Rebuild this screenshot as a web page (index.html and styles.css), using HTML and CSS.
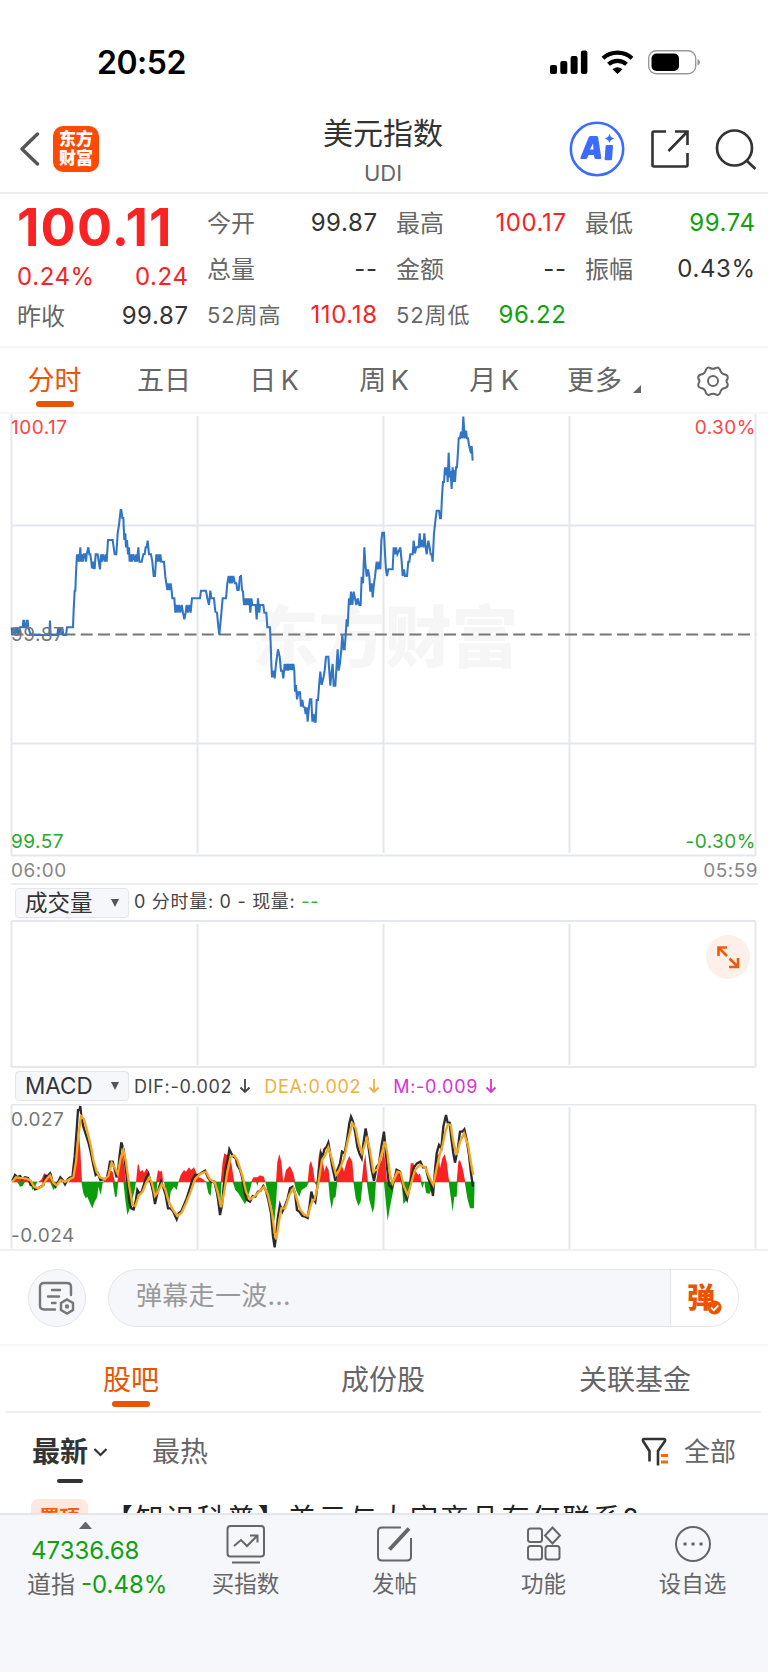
FILE: index.html
```html
<!DOCTYPE html>
<html lang="zh-CN">
<head>
<meta charset="UTF-8" />
<meta name="viewport" content="width=device-width, initial-scale=1" />
<title>美元指数 UDI</title>
<link rel="stylesheet" href="styles.css">
</head>
<body>

<!-- Status bar -->
<div class="status-bar">
  <span class="clock">20:52</span>
  <svg class="status-icons" width="152" height="28" viewBox="0 0 152 28" aria-hidden="true">
    <rect x="0" y="15" width="7" height="9" rx="2"/>
    <rect x="10.300" y="11" width="7" height="13" rx="2"/>
    <rect x="20.600" y="6" width="7" height="18" rx="2"/>
    <rect x="30.900" y="0.500" width="6.500" height="23.500" rx="2"/>
    <g fill="none" stroke="#000" stroke-width="4.200">
      <path d="M53 8.300a21.500 21.500 0 0 1 29 0"/>
      <path d="M58.500 14.300a13.500 13.500 0 0 1 18 0"/>
    </g>
    <path d="M67.500 24l-5-4.800q5-4 10 0z"/>
    <rect x="98.700" y="0.700" width="47" height="23" rx="7.500" fill="none" stroke="#999" stroke-width="1.400"/>
    <rect x="101.500" y="3.500" width="27.500" height="17.500" rx="5"/>
    <path d="M147.500 9v6.500q2.500-1 2.500-3.200t-2.500-3.300z" fill="#999"/>
  </svg>
</div>

<!-- Header -->
<header class="header">
  <div class="header-left">
    <svg width="20" height="34" viewBox="0 0 20 34" fill="none" stroke="#555" stroke-width="3.400" stroke-linecap="round" stroke-linejoin="round"><path d="M17.500 2L2 17l15.500 15"/></svg>
    <div class="logo"><span>东方</span><span>财富</span></div>
  </div>
  <div class="header-title">
    <h1>美元指数</h1>
    <p>UDI</p>
  </div>
  <div class="header-right">
    <svg width="56" height="56" viewBox="0 0 56 56">
      <circle cx="28" cy="28" r="26.200" fill="#fff" stroke="#3b6cff" stroke-width="2.600"/>
      <path fill="#3b6cff" fill-rule="evenodd" d="M19.500 16.500q.5-1.500 2-1.500h6q1.500 0 1.700 1.500l3 20q.2 1.500-1.200 1.500h-4q-1.500 0-1.700-1.500l-.3-2.500h-5.500l-1 2.500q-.5 1.500-2 1.500h-4q-1.500 0-1-1.500zM21 28.500h3.500l-.5-6z"/>
      <path fill="#3b6cff" d="M38 24h5q1.200 0 1 1.300l-1 12.700q-.1 1.300-1.400 1.300h-4.800q-1.300 0-1.200-1.300l1-12.700q.1-1.300 1.400-1.300zM40.500 13l1.300 2.800 3.200 1.700-3.200 1.700-1.300 2.800-1.300-2.800-3.200-1.700 3.200-1.700z"/>
    </svg>
    <svg width="40" height="40" viewBox="0 0 40 40" fill="none" stroke="#333" stroke-width="2.600">
      <path d="M16 2.500H4q-1.500 0-1.500 1.500v32q0 1.500 1.500 1.500h32q1.500 0 1.500-1.500V24M25 2.500h12.500V16M37 3L18.500 22"/>
    </svg>
    <svg width="42" height="42" viewBox="0 0 42 42" fill="none" stroke="#333" stroke-width="2.700">
      <circle cx="19.500" cy="20" r="17.500"/><path d="M31.500 32.500l9 8.500"/>
    </svg>
  </div>
</header>

<!-- Quote -->
<section class="quote">
  <div class="quote-col main">
    <div class="price red">100.11</div>
    <div class="row change"><b class="red">0.24%</b><b class="red">0.24</b></div>
    <div class="row prev"><span>昨收</span><b>99.87</b></div>
  </div>
  <div class="quote-col">
    <div class="row"><span>今开</span><b>99.87</b></div>
    <div class="row"><span>总量</span><b>--</b></div>
    <div class="row"><span class="small">52周高</span><b class="red">110.18</b></div>
  </div>
  <div class="quote-col">
    <div class="row"><span>最高</span><b class="red">100.17</b></div>
    <div class="row"><span>金额</span><b>--</b></div>
    <div class="row"><span class="small">52周低</span><b class="green">96.22</b></div>
  </div>
  <div class="quote-col">
    <div class="row"><span>最低</span><b class="green">99.74</b></div>
    <div class="row"><span>振幅</span><b>0.43%</b></div>
  </div>
</section>

<!-- Period tabs -->
<nav class="periods">
  <span class="active">分时</span>
  <span>五日</span>
  <span>日 K</span>
  <span>周 K</span>
  <span>月 K</span>
  <span class="more">更多<i></i></span>
  <span class="gear">
    <svg width="32" height="30" viewBox="0 0 32 30" fill="none" stroke="#666" stroke-width="2" stroke-linejoin="round">
      <path d="M9 3.500Q11 .5 13 2q3 1.500 6 0 2-1.500 4 1.500 1 4.500 5 5 3.500 1 2.500 4.500-2 2 0 4.500 1 3.500-2.500 4.500-4 .5-5 5-2 3-4 1.500-3-1.500-6 0-2 1.500-4-1.500-1-4.500-5-5-3.500-1-2.500-4.500 2-2.500 0-4.500-1-3.500 2.500-4.500 4-.5 5-5z"/>
      <circle cx="16" cy="15" r="5"/>
    </svg>
  </span>
</nav>

<!-- Intraday chart -->
<svg class="chart" width="768" height="443" viewBox="0 414 768 443">
  <text class="watermark" x="252" y="662">东方财富</text>
  <path class="grid" d="M11.500 414v442M197.500 416v437M383.500 416v437M569.500 416v437M755.500 414v442M11.500 525.500h744M11.500 743.500h744M11.500 855.500h744"/>
  <path d="M11.500 634.500h744" stroke="#777" stroke-width="2" stroke-dasharray="12 5.300"/>
  <g class="price-line" transform="translate(0 410) scale(.33333)">
    <polyline points="35,652 37,675 41,652 45,675 50,652 55,675 60,652 68,652 70,632 72,632 74,652 78,652 80,632 83,632 85,652 92,675 148,675 150,632 152,675 172,675 175,652 178,675 182,652 184,675 187,652 190,675 198,675 201,652 219,652 221,600 224,542 226,542 228,490 231,433 233,455 236,433 238,455 241,412 243,455 247,433 249,455 252,433 256,433 258,455 260,433 265,412 268,433 271,433 274,455 276,475 279,455 281,475 284,475 287,433 293,433 296,455 300,478 303,433 305,455 310,433 314,455 318,433 320,455 324,390 338,390 341,412 344,433 349,433 353,370 357,345 362,300 364,300 367,324 370,324 373,390 376,370 378,412 381,390 384,433 387,412 389,455 393,433 395,455 400,433 405,455 409,433 411,455 415,412 418,455 425,455 430,433 434,433 437,412 440,412 443,392 447,433 453,433 457,455 461,498 465,498 469,433 472,455 475,433 478,455 481,433 484,455 492,455 496,500 499,520 502,540 505,520 508,540 512,520 515,542 517,565 523,565 526,608 530,585 533,608 537,585 541,608 545,585 549,608 553,628 557,608 560,585 564,608 568,585 572,608 576,565 600,565 603,542 618,542 622,565 627,585 631,542 634,565 642,565 646,605 651,608 655,650 658,675 664,610 668,565 678,565 682,520 686,498 690,520 693,498 696,520 700,498 705,520 709,520 712,540 716,540 720,498"/>
    <polyline transform="translate(720 0)" points="0,498 3,498 6,540 9,545 12,585 16,565 18,585 22,565 25,585 28,565 31,608 34,565 37,585 47,585 50,628 54,565 58,608 60,585 70,585 73,608 79,608 82,652 90,652 92,700 94,760 96,802 100,782 104,805 108,762 111,740 114,718 119,740 123,782 127,782 130,805 134,762 137,782 141,762 144,782 147,762 151,780 154,762 157,780 160,762 163,782 165,845 168,825 171,868 175,847 180,847 183,890 187,870 190,890 194,892 197,912 200,892 203,935 207,890 210,868 214,868 217,935 221,912 224,935 227,935 230,870 234,870 237,830 241,785 245,825 250,805 254,782 258,740 265,740 268,785 271,827 275,785 278,762 281,827 286,827 290,762 293,718 296,782 300,760 304,718 307,675 311,718 314,718 317,675 320,628 323,650 327,565 330,585 333,545 337,585 341,545 345,565 349,585 353,565 358,585 362,585 365,500 369,520 373,412 376,460 380,500 384,478 388,500 391,545 395,520 398,562 402,520 405,500 410,455 414,478 418,455 421,478 424,392 427,368 432,368 435,430 438,480 441,498 445,478 458,478 461,412 465,433 468,412 472,433 481,412 485,455 488,498 492,478 495,498 501,498 505,455 508,455 511,433 518,433 521,392 525,430 529,412 536,412 539,370 542,412 546,390 550,412 553,370 557,412 560,433 565,392 569,412 572,433 575,433 578,455 582,370 587,325 590,302 597,302 600,325 603,325 606,260 609,216 612,216 615,172 618,195 621,172 623,216 626,128 629,195 632,190 635,237 638,172 641,216 643,180 645,216 648,172 651,172 655,108 656,85 660,85 663,65 667,85 670,20 674,85 678,62 681,85 684,85 687,105 693,130 695,108 698,152"/>
  </g>
  <text class="tick up" x="11" y="433.500">100.17</text>
  <text class="tick up end" x="756" y="433.500">0.30%</text>
  <text class="tick base" x="11" y="641">99.87</text>
  <text class="tick down" x="11" y="848">99.57</text>
  <text class="tick down end" x="756" y="848">-0.30%</text>
</svg>
<div class="times"><span>06:00</span><span>05:59</span></div>

<!-- Volume -->
<div class="legend">
  <button class="picker">成交量<i></i></button>
  <span class="volume-text">0 分时量: 0 - 现量: <em>--</em></span>
</div>
<div class="volume">
  <svg width="768" height="148" viewBox="0 920 768 148">
    <path class="grid" d="M11.500 921v146M197.500 924v141M383.500 924v141M569.500 924v141M755.500 921v146M11.500 921h744M11.500 1067h744"/>
  </svg>
  <button class="expand" aria-label="全屏">
    <svg width="24" height="24" viewBox="0 0 24 24" fill="none" stroke="#ee5a0c" stroke-width="2.600">
      <path d="M2.500 11V2.500H11M3 3l8 8M13 22h9v-9M21.500 21.500l-8-8"/>
    </svg>
  </button>
</div>

<!-- MACD -->
<div class="legend macd-legend">
  <button class="picker">MACD<i></i></button>
  <span class="dif">DIF:-0.002<svg viewBox="0 0 12 16"><path d="M6 1v13M1.500 9.500L6 14l4.500-4.500"/></svg></span>
  <span class="dea">DEA:0.002<svg viewBox="0 0 12 16"><path d="M6 1v13M1.500 9.500L6 14l4.500-4.500"/></svg></span>
  <span class="m">M:-0.009<svg viewBox="0 0 12 16"><path d="M6 1v13M1.500 9.500L6 14l4.500-4.500"/></svg></span>
</div>
<svg class="chart" width="768" height="145" viewBox="0 1104 768 145">
  <path class="grid" d="M11.500 1104.500v144M197.500 1107v142M383.500 1107v142M569.500 1107v142M755.500 1104.500v144M11.500 1104.500h744"/>
  <text class="tick" x="11" y="1126">0.027</text>
  <text class="tick" x="11" y="1242">-0.024</text>
  <g transform="translate(0 1090) scale(.33333)">
    <path fill="#f92323" d="M37 277L45 258 60 268 68 262 85 268 90 277zM115 277L125 268 132 250 145 258 155 248 160 277zM172 277L182 262 188 277zM205 277L218 262 226 210 232 150 237 130 241 180 246 277zM310 277L322 255 330 240 338 245 345 277zM352 277L360 220 367 195 373 230 378 277zM408 277L413 225 416 222 420 245 428 240 432 248 440 235 447 245 455 277zM468 277L474 240 480 245 486 242 490 277zM535 277L542 255 552 240 558 245 567 232 573 240 582 232 588 245 592 260 605 265 620 277zM662 277L668 215 673 190 680 195 688 190 695 225 703 277z"/>
    <path fill="#0a9e0a" d="M52 275L60 290 68 288 75 275zM90 275L97 300 105 290 112 275zM150 275L160 300 168 290 178 275zM244 275L250 310 257 325 262 320 268 335 277 355 284 335 292 320 295 290 302 315 308 280 312 275zM338 275L345 320 350 320 355 275zM370 275L376 330 382 375 390 355 398 325 404 300 408 275zM453 275L460 310 467 335 472 275zM492 275L503 330 508 340 512 305 522 290 530 300 536 275zM618 275L625 310 632 318 636 275zM640 275L652 330 660 355 665 275zM698 275L706 300 715 310 720 318 735 343 742 325 750 300 756 275z"/>
    <g transform="translate(720 0)">
      <path fill="#f92323" d="M33 277L40 262 52 262 60 256 72 260 76 277zM108 277L112 215 118 192 124 215 130 277 138 240 150 228 160 250 166 277zM203 277L208 225 213 212 219 235 225 277zM230 277L236 200 241 172 248 215 254 245 258 225 266 240 270 277zM288 277L297 240 305 225 312 245 320 215 328 198 337 215 342 277zM365 277L370 225 376 192 380 240 384 277zM408 277L415 235 425 210 432 180 438 240 441 277zM460 277L466 235 478 240 486 277zM508 277L512 220 520 220 528 245 535 255 540 250 545 277zM585 277L589 200 596 190 600 235 607 205 614 192 620 215 626 265 630 277zM650 277L655 215 660 210 668 235 676 277z"/>
      <path fill="#0a9e0a" d="M48 275L52 288 56 275zM76 275L85 315 95 350 103 395 108 340 112 275zM162 275L168 300 178 320 185 300 200 290 207 275zM222 275L228 285 232 275zM265 275L269 320 275 358 281 325 287 320 292 275zM340 275L347 325 355 348 362 335 368 275zM380 275L388 330 398 368 403 350 408 275zM432 275L437 330 443 392 450 350 458 310 464 275zM485 275L490 342 500 330 506 300 508 275zM542 275L547 295 553 275 558 308 568 312 574 300 580 318 584 275zM626 275L632 320 638 365 643 320 650 320 653 275zM674 275L682 325 690 355 702 355 704 275z"/>
    </g>
    <path d="M35 275.500h1387" stroke="#c55" stroke-width="2" opacity=".5"/>
    <polyline class="dif-line" points="37,272 45,255 52,262 60,258 66,268 75,262 84,264 92,285 98,283 105,298 113,295 122,290 130,285 136,258 143,258 150,250 157,275 167,290 173,278 181,262 188,270 195,283 203,268 210,262 217,262 224,200 230,120 234,60 239,58 241,48 244,80 250,110 258,135 266,160 273,190 280,225 287,255 294,250 301,270 310,268 320,265 326,240 330,215 338,215 343,235 350,262 355,235 359,195 364,157 371,180 376,225 382,275 388,335 394,355 401,358 407,335 412,300 418,310 425,305 433,280 438,265 445,252 453,280 459,305 465,342 472,310 478,290 483,275 489,290 497,315 504,355 512,355 520,365 530,388 536,370 543,365 552,345 560,325 568,300 577,270 585,255 595,255 605,248 615,242 624,262 632,275 643,275 652,310 660,375 666,345 671,290 678,230 684,205 688,178 694,190 700,200 707,205 712,225 720,240"/>
    <polyline class="dif-line" transform="translate(720 0)" points="0,240 6,260 14,310 21,330 30,335 38,318 46,320 54,305 62,302 70,288 77,300 85,330 93,370 99,440 104,472 108,440 114,380 120,345 127,365 136,345 143,325 150,295 158,290 165,310 171,360 178,365 187,378 196,380 203,384 209,345 214,305 220,325 226,335 232,290 238,230 243,190 248,200 253,178 260,170 265,158 271,195 277,230 286,272 292,240 300,220 306,185 314,190 321,150 328,100 333,80 339,95 346,130 352,170 358,190 365,205 371,155 377,115 383,150 388,190 395,240 402,272 410,230 417,222 424,170 432,125 437,180 441,230 447,285 455,295 463,268 471,240 480,245 487,275 494,310 501,328 508,295 514,260 522,232 531,220 541,215 549,232 557,232 565,265 573,285 579,318 585,240 590,190 597,165 604,175 610,110 618,75 623,98 629,98 634,145 640,190 645,218 653,180 660,125 667,125 673,118 680,150 687,195 693,250 699,290"/>
    <polyline class="dea-line" points="37,275 48,262 60,264 80,266 92,272 102,290 113,295 126,290 138,270 150,256 160,278 170,286 182,270 195,276 210,266 220,262 228,215 235,140 243,78 252,88 262,125 272,165 280,210 290,245 300,262 315,268 325,258 335,218 345,235 353,252 362,205 370,180 378,215 388,290 398,345 406,348 416,318 428,305 438,280 448,262 456,280 465,318 474,305 485,282 496,298 506,335 518,358 532,378 545,368 558,340 572,305 585,268 600,252 618,245 630,268 645,278 654,310 663,352 672,310 682,245 692,200 702,196 712,210 720,235"/>
    <polyline class="dea-line" transform="translate(720 0)" points="0,235 8,260 18,305 30,328 45,318 60,302 72,290 84,315 96,370 104,430 109,448 116,400 124,355 135,355 148,315 160,295 170,325 180,358 193,374 203,378 214,340 224,328 234,285 246,210 256,195 265,172 275,205 288,255 298,240 312,205 325,145 337,100 347,115 356,160 366,190 374,165 381,145 390,180 400,245 412,238 425,190 435,155 442,190 450,255 458,280 472,245 482,248 492,290 503,315 512,285 525,240 540,225 556,232 568,262 580,285 590,235 600,190 608,165 616,125 624,103 632,105 641,160 650,195 660,155 672,130 684,165 694,225 700,255"/>
  </g>
</svg>

<!-- Danmaku input -->
<div class="danmaku">
  <div class="danmaku-set">
    <svg width="38" height="34" viewBox="0 0 38 34" fill="none" stroke="#777" stroke-width="2.400" stroke-linecap="round">
      <path d="M17 28.500H6q-4 0-4-4V6q0-4 4-4h23q4 0 4 4v8M14 9h8M10 15.500h11M14 22h3.500"/>
      <path d="M29 18.500l6 3.500v7l-6 3.500-6-3.500v-7z"/><circle cx="29" cy="25.500" r="1"/>
    </svg>
  </div>
  <div class="danmaku-box">
    <span>弹幕走一波...</span>
    <div class="danmaku-send">
      <b>弹</b>
      <svg width="15" height="15" viewBox="0 0 15 15"><circle cx="7.500" cy="7.500" r="7" fill="#ea5504"/><path d="M4 7.500l2.800 2.800 4.500-5" fill="none" stroke="#fff" stroke-width="1.800"/></svg>
    </div>
  </div>
</div>

<!-- Section tabs -->
<nav class="sections">
  <span class="active">股吧</span>
  <span>成份股</span>
  <span>关联基金</span>
</nav>

<div class="filters">
  <span class="newest">最新<svg width="15" height="9" viewBox="0 0 15 9" fill="none" stroke="#333" stroke-width="2.200"><path d="M1.500 1l6 6 6-6"/></svg></span>
  <span class="hot">最热</span>
  <span class="all">
    <svg width="28" height="30" viewBox="0 0 28 30" fill="none" stroke="#333" stroke-width="2.600" stroke-linejoin="round">
      <path d="M8.500 24.500V14L2 4q-.5-2 1-2h20q1.500 0 1 2l-7 10v14.500"/>
      <path d="M20 18.500h7M20 25h7" stroke="#f60" stroke-width="3"/>
    </svg>
    全部
  </span>
</div>

<div class="post">
  <span class="badge">置顶</span>
  <span class="post-title">【知识科普】美元与大宗商品有何联系?</span>
</div>

<!-- Bottom bar -->
<footer class="bottom-bar">
  <div class="index">
    <i></i>
    <span class="green">47336.68</span>
    <span>道指<b class="green">-0.48%</b></span>
  </div>
  <div class="action">
    <svg width="40" height="40" viewBox="0 0 40 40"><rect x="1.500" y="2" width="36.500" height="30.500" rx="3"/><path d="M8 22l7-6 6 6 10-10M24 11.500h7.500v7M6 38.500h28"/></svg>
    买指数
  </div>
  <div class="action">
    <svg width="40" height="40" viewBox="0 0 40 40"><path d="M26 3.500H7q-4 0-4 4v25q0 4 4 4h25q4 0 4-4V14"/><path d="M14.500 25.500L34 4.500" stroke-width="4"/></svg>
    发帖
  </div>
  <div class="action">
    <svg width="40" height="40" viewBox="0 0 40 40"><rect x="4" y="4.500" width="14" height="13.500" rx="2.500"/><path d="M28.500 3.500l7.500 8-7.500 8-7.500-8z"/><rect x="4" y="22" width="14" height="13.500" rx="2.500"/><rect x="21.500" y="22" width="14" height="13.500" rx="2.500"/></svg>
    功能
  </div>
  <div class="action">
    <svg width="40" height="40" viewBox="0 0 40 40"><circle cx="20" cy="20" r="17"/><path d="M12 20h.1M20 20h.1M28 20h.1" stroke-width="3.500" stroke-linecap="round"/></svg>
    设自选
  </div>
</footer>

</body>
</html>
```
FILE: styles.css
```css
* { box-sizing: border-box; }
body {
  margin: 0;
  width: 768px;
  height: 1672px;
  overflow: hidden;
  background: #fff;
  color: #666;
  font-family: Inter, 'Noto Sans CJK SC', sans-serif;
  display: flex;
  flex-direction: column;
}
body > * { flex-shrink: 0; }
svg { display: block; }
b, em, i { font-weight: 400; font-style: normal; }
button {
  font-family: inherit;
  border: none;
  padding: 0;
  margin: 0;
}
.red { color: #f92323 !important; }
.green { color: #10a010 !important; }

/* Status bar */
.status-bar {
  height: 100px;
  padding: 0 66px 0 97px;
  display: flex;
  justify-content: space-between;
}
.clock {
  margin-top: 43px;
  font-size: 32px;
  line-height: 40px;
  font-weight: 600;
  letter-spacing: -.5px;
  color: #000;
}
.status-icons { margin-top: 50px; }

/* Header */
.header {
  height: 94px;
  display: grid;
  grid-template-columns: 1fr 160px 1fr;
  border-bottom: 2px solid #eee;
}
.header-left {
  display: flex;
  align-items: center;
  gap: 13px;
  padding: 6px 0 0 20px;
}
.logo {
  width: 46px;
  height: 46px;
  border-radius: 10px;
  background: #ff4a05;
  color: #fff;
  font-size: 17px;
  line-height: 19px;
  font-weight: 900;
  display: flex;
  flex-direction: column;
  align-items: center;
  justify-content: center;
}
.header-title {
  text-align: center;
  padding-right: 2px;
}
.header-title h1 {
  margin: 13px 0 0;
  font-size: 30px;
  line-height: 40px;
  font-weight: 400;
  color: #333;
}
.header-title p {
  margin: 6px 0 0;
  font-size: 22px;
  line-height: 28px;
}
.header-right {
  display: flex;
  align-items: center;
  justify-content: flex-end;
  gap: 25px;
  padding: 6px 11px 0 0;
}

/* Quote */
.quote {
  height: 154px;
  padding: 5px 13px 0 17px;
  display: grid;
  grid-template-columns: 171px 170px 170px 170px;
  column-gap: 19px;
  border-bottom: 2px solid #f7f7f7;
}
.row {
  height: 46px;
  display: flex;
  justify-content: space-between;
  align-items: center;
  font-size: 24px;
}
.row span { margin-top: -2px; }
.row b {
  color: #333;
  letter-spacing: .6px;
  margin-right: -.6px;
}
.row .small {
  font-size: 22px;
  letter-spacing: .9px;
}
.price {
  height: 57px;
  font-size: 52px;
  line-height: 57px;
  font-weight: 700;
  letter-spacing: 1.2px;
}
.change { height: 40px; }
.prev { height: 38px; }

/* Period tabs */
.periods {
  height: 66px;
  display: grid;
  grid-template-columns: 109px repeat(5, 110px) 107px;
  border-bottom: 2px solid #f7f7f7;
}
.periods span {
  font-size: 27px;
  line-height: 65px;
  text-align: center;
  word-spacing: -3px;
}
.periods .active, .sections .active {
  color: #ea5504;
  display: flex;
  flex-direction: column;
  align-items: center;
}
.periods .active::after, .sections .active::after {
  content: "";
  width: 38px;
  height: 6px;
  margin-top: -12px;
  border-radius: 3px;
  background: #ea5504;
}
.periods .more { letter-spacing: 1px; }
.more i {
  display: inline-block;
  margin-left: 10px;
  position: relative;
  top: 3px;
  border-left: 8px solid transparent;
  border-bottom: 8px solid #666;
}
.gear {
  display: flex;
  align-items: center;
  justify-content: center;
}

/* Charts */
.grid {
  fill: none;
  stroke: #e6e7ee;
  stroke-width: 2;
}
.watermark {
  font-size: 66.500px;
  font-weight: 900;
  fill: #f6f6f6;
}
.price-line polyline {
  fill: none;
  stroke: #3275c4;
  stroke-width: 6.2;
}
.tick {
  font-size: 19px;
  letter-spacing: .5px;
  fill: #777;
}
.tick.up { fill: #f44; }
.tick.down { fill: #2ba82b; }
.tick.end { text-anchor: end; }
.dif-line, .dea-line {
  fill: none;
  stroke: #2b2b2b;
  stroke-width: 7;
}
.dea-line { stroke: #f5a623; }
.times {
  height: 28px;
  margin: 0 10px 0 11px;
  display: flex;
  justify-content: space-between;
  font-size: 19px;
  line-height: 27px;
  letter-spacing: .5px;
  color: #888;
  border-bottom: 2px solid #eee;
}
.legend {
  height: 35px;
  padding-left: 15px;
  display: flex;
  align-items: center;
  font-size: 18px;
  letter-spacing: .7px;
  color: #444;
}
.picker {
  width: 114px;
  height: 30px;
  margin-right: 5px;
  padding: 0 9px;
  display: flex;
  align-items: center;
  justify-content: space-between;
  font-size: 22.5px;
  line-height: 26px;
  color: #333;
  background: #f6f7fa;
  border: 1px solid #e4e5ec;
  border-radius: 4px;
}
.picker i {
  border: 4.5px solid transparent;
  border-top: 8px solid #555;
  border-bottom: 0;
}
.volume-text { line-height: 26px; padding-bottom: 2px; }
.legend em { color: #2fb52f; }
.volume { position: relative; }
.expand {
  position: absolute;
  right: 18px;
  top: 15px;
  width: 44px;
  height: 44px;
  border-radius: 50%;
  background: #fdf0e9;
  display: flex;
  align-items: center;
  justify-content: center;
}
.macd-legend { height: 36px; }
.macd-legend span {
  display: flex;
  align-items: center;
  margin-right: 13px;
}
.macd-legend span svg {
  width: 12px;
  height: 16px;
  margin-left: 7px;
  fill: none;
  stroke: currentColor;
  stroke-width: 1.8;
}
.dea { color: #f0b040; }
.m { color: #d832d8; }

/* Danmaku */
.danmaku {
  height: 97px;
  padding: 0 29px 0 28px;
  display: flex;
  align-items: center;
  justify-content: space-between;
  border-top: 2px solid #f0f0f2;
  border-bottom: 2px solid #f7f7f7;
}
.danmaku-set {
  width: 58px;
  height: 58px;
  border: 1.5px solid #e4e5ea;
  border-radius: 50%;
  background: #f6f7fa;
  display: flex;
  align-items: center;
  justify-content: center;
}
.danmaku-box {
  width: 631px;
  height: 58px;
  border: 1.5px solid #e4e5ea;
  border-radius: 29px;
  background: #f6f7fa;
  overflow: hidden;
  display: flex;
  justify-content: space-between;
  font-size: 26px;
  line-height: 52px;
  letter-spacing: .3px;
  color: #999;
  padding-left: 27px;
}
.danmaku-send {
  width: 68px;
  border-left: 1.5px solid #e4e5ea;
  background: #fff;
  display: flex;
  align-items: center;
  padding-left: 16px;
}
.danmaku-send b {
  font-size: 28px;
  font-weight: 900;
  color: #ea5504;
}
.danmaku-send svg { margin: 20px 0 0 -8px; }

/* Section tabs */
.sections {
  height: 67px;
  margin: 0 7px 0 5px;
  display: grid;
  grid-template-columns: repeat(3, 1fr);
  border-bottom: 2px solid #f0f0f2;
}
.sections span {
  font-size: 28px;
  line-height: 68px;
  text-align: center;
}
.sections .active::after { margin-top: -13px; }
.filters {
  height: 82px;
  padding: 0 32px;
  display: flex;
  font-size: 28px;
  line-height: 78px;
}
.newest {
  position: relative;
  width: 120px;
  color: #333;
  font-weight: 700;
  display: flex;
  align-items: center;
  gap: 5px;
  height: 78px;
}
.newest::after {
  content: "";
  position: absolute;
  left: 25px;
  top: 66px;
  width: 26px;
  height: 4px;
  border-radius: 2px;
  background: #333;
}
.all {
  margin-left: auto;
  height: 78px;
  display: flex;
  align-items: center;
  gap: 15px;
  font-size: 26px;
}
.post {
  height: 18px;
  overflow: hidden;
  padding: 4px 31px 0;
  display: flex;
}
.badge {
  width: 57px;
  height: 40px;
  border-radius: 7px;
  background: #ffe9df;
  color: #ff5a0a;
  font-size: 20px;
  line-height: 38px;
  font-weight: 700;
  text-align: center;
}
.post-title {
  margin-left: 17px;
  font-size: 28px;
  line-height: 40px;
  letter-spacing: 2.5px;
  color: #222;
  white-space: nowrap;
}

/* Bottom bar */
.bottom-bar {
  height: 160px;
  display: flex;
  background: #f6f7fa;
  border-top: 2px solid #e4e5e9;
}
.index {
  width: 171px;
  padding: 7px 0 0 27px;
  display: flex;
  flex-direction: column;
  font-size: 24px;
  line-height: 34px;
}
.index i {
  margin-left: 52px;
  width: 13px;
  border: 6.5px solid transparent;
  border-bottom: 7px solid #666;
  border-top: 0;
}
.index span:nth-child(2) { margin: 5px 0 0 4px; }
.index b { margin-left: 6px; }
.action {
  width: 149px;
  padding-top: 9px;
  display: flex;
  flex-direction: column;
  align-items: center;
  font-size: 22.5px;
  line-height: 40px;
}
.action svg {
  fill: none;
  stroke: #666;
  stroke-width: 2;
}
```
